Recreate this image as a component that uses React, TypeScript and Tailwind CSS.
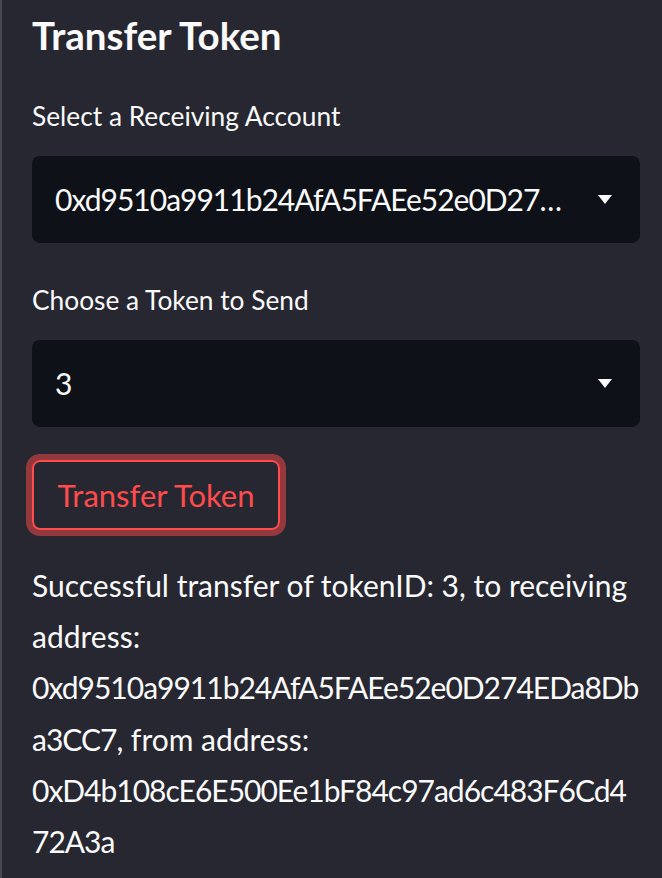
const receiver = "0xd9510a9911b24AfA5FAEe52e0D274EDa8Dba3CC7"
const sender = "0xD4b108cE6E500Ee1bF84c97ad6c483F6Cd472A3a"

const Caret = () => (
    <svg width="14" height="9" viewBox="0 0 14 9" className="shrink-0">
        <path d="M0 0 H14 L7 9 Z" fill="#fafafa" />
    </svg>
)

const SelectBox = ({ value }: { value: string }) => (
    <div className="flex h-[87px] w-full items-center rounded-lg bg-[#0e1117] pl-[23px] pr-[28px]">
        <span className="min-w-0 flex-1 truncate pr-[34px] text-[30px] tracking-[-1px] text-[#fafafa]">{value}</span>
        <Caret />
    </div>
)

export default function App() {
    return (
        <div className="min-h-screen border-l-2 border-[#45464f] bg-[#262730] pl-[30px] pr-[22px] pt-[13px] text-[#fafafa]" style={{ fontFamily: "Lato, sans-serif" }}>
            {/* title */}
            <h2 className="text-[38.5px] font-bold leading-[44px]">Transfer Token</h2>

            {/* receiving account */}
            <label className="mt-[41px] block text-[26.3px] leading-[36px]">Select a Receiving Account</label>
            <div className="mt-[22px]">
                <SelectBox value={receiver} />
            </div>

            {/* token */}
            <label className="mt-[39px] block text-[26.3px] leading-[36px]">Choose a Token to Send</label>
            <div className="mt-[22px]">
                <SelectBox value="3" />
            </div>

            <button className="mt-[33px] flex h-[70px] w-[248px] items-center justify-center rounded-lg border-2 border-[#ff4b4b] text-[31px] text-[#ff4b4b] shadow-[0_0_0_6px_rgba(255,75,75,0.5)]">
                Transfer Token
            </button>

            <p className="mt-[30px] text-[30px] leading-[51.2px] [overflow-wrap:anywhere]">
                Successful transfer of tokenID: 3, to receiving address:{" "}
                <span className="tracking-[-1px]">{receiver}</span>, from address:{" "}
                <span className="tracking-[-1px]">{sender}</span>
            </p>
        </div>
    )
}
